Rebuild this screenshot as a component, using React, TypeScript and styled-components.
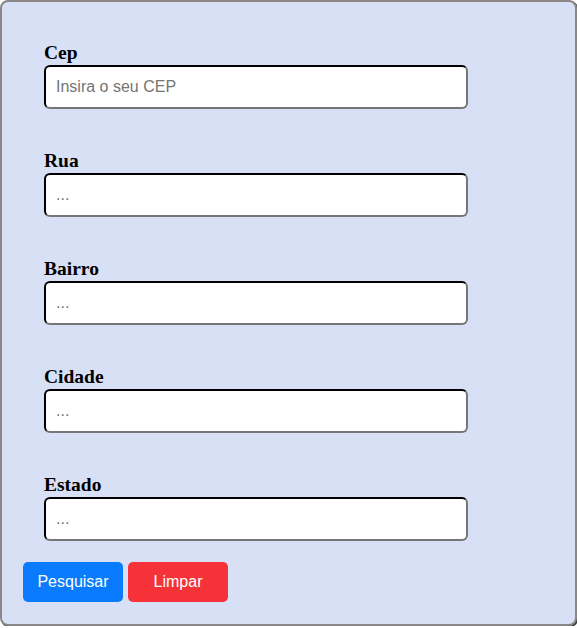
import React from "react";
import styled, { createGlobalStyle } from "styled-components";

const Global = createGlobalStyle`
  html, body { margin: 0; padding: 0; background: #ffffff; }
  * { box-sizing: border-box; }
`;

const Card = styled.div`
  width: 577px;
  height: 626px;
  background: #d8e0f5;
  border: 2px solid #8c8686;
  border-radius: 8px;
  box-shadow: 1px 1px 0 #3a3a3a;
  padding: 42px 20px 0 21px;
  display: flex;
  flex-direction: column;
`;

const Fields = styled.div`
  display: flex;
  flex-direction: column;
  gap: 43px;
  padding-left: 21px;
`;

const Field = styled.div`
  display: flex;
  flex-direction: column;
`;

const Label = styled.label`
  font-family: "Liberation Serif", "Times New Roman", serif;
  font-weight: bold;
  font-size: 19.5px;
  line-height: 18px;
  padding-bottom: 3px;
  color: #000;
`;

const Input = styled.input`
  width: 424px;
  height: 44px;
  border: 2px inset #767676;
  border-top-color: #1e1e30;
  border-left-color: #1e1e30;
  border-bottom-color: #767676;
  border-right-color: #767676;
  border-radius: 6px;
  background: #fff;
  padding: 0 10px;
  font-family: "Liberation Sans", Arial, sans-serif;
  font-size: 16px;
  color: #000;
  outline: none;
  &::placeholder { color: #757575; }
`;

const Buttons = styled.div`
  display: flex;
  gap: 5px;
  margin-top: 21px;
`;

const Button = styled.button<{ $bg: string }>`
  width: 100px;
  height: 40px;
  border: none;
  border-radius: 5px;
  background: ${(p) => p.$bg};
  color: #fff;
  font-family: "Liberation Sans", Arial, sans-serif;
  font-size: 16px;
  cursor: pointer;
`;

const fields = [
  { label: "Cep", placeholder: "Insira o seu CEP" },
  { label: "Rua", placeholder: "..." },
  { label: "Bairro", placeholder: "..." },
  { label: "Cidade", placeholder: "..." },
  { label: "Estado", placeholder: "..." },
];

export default function App() {
  return (
    <>
      <Global />
      <Card>
        <Fields>
          {fields.map((f) => (
            <Field key={f.label}>
              <Label>{f.label}</Label>
              <Input placeholder={f.placeholder} />
            </Field>
          ))}
        </Fields>
        <Buttons>
          <Button $bg="#0a7bfd">Pesquisar</Button>
          <Button $bg="#f53238">Limpar</Button>
        </Buttons>
      </Card>
    </>
  );
}
